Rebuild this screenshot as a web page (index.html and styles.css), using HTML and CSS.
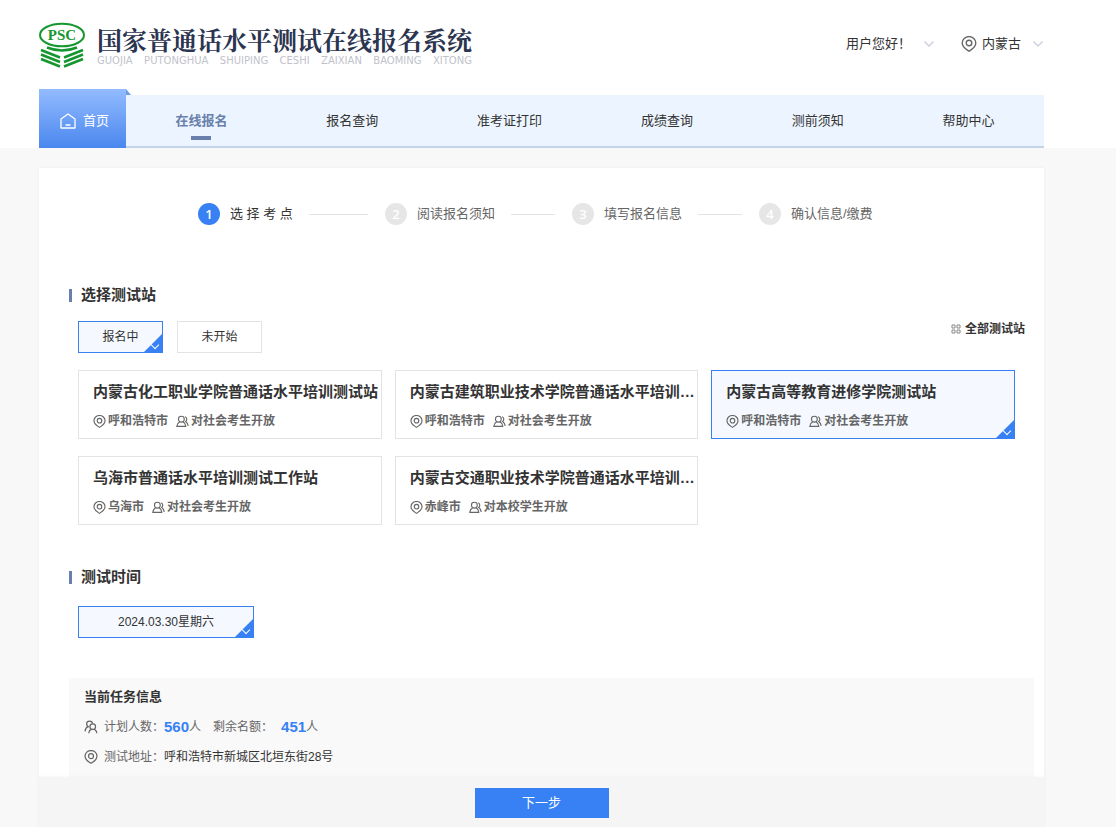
FILE: index.html
```html
<!DOCTYPE html>
<html lang="zh-CN">
<head>
<meta charset="utf-8">
<meta name="viewport" content="width=device-width, initial-scale=1">
<title>国家普通话水平测试在线报名系统</title>
<link rel="stylesheet" href="styles.css">
</head>
<body>
<svg class="sprite" aria-hidden="true">
  <symbol id="pin" viewBox="0 0 16 16">
    <path d="M8 15.2 C5.6 13.6 1.2 11.4 1.2 7 A6.8 6.4 0 0 1 14.8 7 C14.8 11.4 10.4 13.6 8 15.2Z"/>
    <circle cx="8" cy="7" r="2.8"/>
  </symbol>
  <symbol id="people" viewBox="0 0 16 16">
    <circle cx="6.6" cy="5.2" r="3.6"/>
    <path d="M4.6 8.4 C2.4 9.6 1.2 11.4 1 14 H12 C11.9 11.4 10.8 9.6 8.6 8.4"/>
    <path d="M11 2.2 C13.8 3 14 6.6 11.8 8 C13.8 9.2 14.8 11 15 13.6"/>
  </symbol>
  <symbol id="crowd" viewBox="0 0 16 16">
    <path d="M6 8 C2 7.200 2 1.400 6.400 1.400 C8.400 1.400 9.600 2.600 9.800 4"/>
    <path d="M4.600 7.600 C2.400 8.600 1.400 10.500 1.200 13"/>
    <circle cx="10" cy="7.600" r="3.200"/>
    <path d="M8.400 10.400 C6.400 11.400 5.600 13 5.400 15.200"/>
    <path d="M11.600 10.400 C13.600 11.400 14.600 13 14.800 15.200"/>
  </symbol>
  <symbol id="chevron" viewBox="0 0 12 8"><path d="M1.500 1.500 6 6 10.500 1.500"/></symbol>
</svg>

<header class="header">
  <div class="wrap">
    <div class="topbar">
      <a class="brand" href="#">
        <svg class="brand-mark" viewBox="0 0 46 46" role="img" aria-label="PSC">
          <ellipse cx="23" cy="13" rx="22" ry="11.300"/>
          <text x="23" y="18" text-anchor="middle">PSC</text>
          <path d="M2 28 L21 35.500 M2 32.500 L21 40 M2 37 L21 44.500 M44 28 L25 35.500 M44 32.500 L25 40 M44 37 L25 44.500"/>
          <path d="M8 25.500 Q23 31.500 38 25.500"/>
        </svg>
        <span class="brand-text">
          <span class="brand-name">国家普通话水平测试在线报名系统</span>
          <span class="brand-pinyin"><span>GUOJIA</span> <span>PUTONGHUA</span> <span>SHUIPING</span> <span>CESHI</span> <span>ZAIXIAN</span> <span>BAOMING</span> <span>XITONG</span></span>
        </span>
      </a>
      <div class="account">
        <button class="user" type="button">用户您好！<svg class="chevron"><use href="#chevron"/></svg></button>
        <label class="region">
          <svg class="icon icon-lg"><use href="#pin"/></svg>
          <select aria-label="地区"><option>内蒙古</option></select>
          <svg class="chevron"><use href="#chevron"/></svg>
        </label>
      </div>
    </div>
    <nav class="nav">
      <a class="home" href="#">
        <svg viewBox="0 0 16 16"><path d="M1 6 8 1 15 6 V15 H1Z M5.500 12 H10.500"/></svg>首页
      </a>
      <div class="links">
        <a class="current" href="#">在线报名</a>
        <a href="#">报名查询</a>
        <a href="#">准考证打印</a>
        <a href="#">成绩查询</a>
        <a href="#">测前须知</a>
        <a href="#">帮助中心</a>
      </div>
    </nav>
  </div>
</header>

<main class="wrap main">
  <div class="panel">
    <ol class="steps">
      <li class="active"><span class="num">1</span><span>选 择 考 点</span></li>
      <li><span class="num">2</span><span>阅读报名须知</span></li>
      <li><span class="num">3</span><span>填写报名信息</span></li>
      <li><span class="num">4</span><span>确认信息/缴费</span></li>
    </ol>

    <section class="stations">
      <h2>选择测试站</h2>
      <div class="filters">
        <button class="option selected" type="button" aria-pressed="true">报名中</button>
        <button class="option" type="button" aria-pressed="false">未开始</button>
        <a class="all" href="#">
          <svg viewBox="0 0 10 10"><path d="M1 1h3v3h-3z M6 1h3v3h-3z M1 6h3v3h-3z M6 6h3v3h-3z"/></svg>全部测试站
        </a>
      </div>
      <div class="cards">
        <button class="card" type="button">
          <span class="name">内蒙古化工职业学院普通话水平培训测试站</span>
          <span class="meta"><svg class="icon"><use href="#pin"/></svg><span>呼和浩特市</span><svg class="icon"><use href="#people"/></svg><span>对社会考生开放</span></span>
        </button>
        <button class="card" type="button">
          <span class="name">内蒙古建筑职业技术学院普通话水平培训测试站</span>
          <span class="meta"><svg class="icon"><use href="#pin"/></svg><span>呼和浩特市</span><svg class="icon"><use href="#people"/></svg><span>对社会考生开放</span></span>
        </button>
        <button class="card selected" type="button">
          <span class="name">内蒙古高等教育进修学院测试站</span>
          <span class="meta"><svg class="icon"><use href="#pin"/></svg><span>呼和浩特市</span><svg class="icon"><use href="#people"/></svg><span>对社会考生开放</span></span>
        </button>
        <button class="card" type="button">
          <span class="name">乌海市普通话水平培训测试工作站</span>
          <span class="meta"><svg class="icon"><use href="#pin"/></svg><span>乌海市</span><svg class="icon"><use href="#people"/></svg><span>对社会考生开放</span></span>
        </button>
        <button class="card" type="button">
          <span class="name">内蒙古交通职业技术学院普通话水平培训测试站</span>
          <span class="meta"><svg class="icon"><use href="#pin"/></svg><span>赤峰市</span><svg class="icon"><use href="#people"/></svg><span>对本校学生开放</span></span>
        </button>
      </div>
    </section>

    <section class="times">
      <h2>测试时间</h2>
      <div class="filters">
        <button class="option date selected" type="button" aria-pressed="true">2024.03.30星期六</button>
      </div>
    </section>

    <section class="info">
      <h3>当前任务信息</h3>
      <p><svg class="icon"><use href="#crowd"/></svg><span>计划人数：</span><strong>560</strong><span>人</span><span class="left">剩余名额：</span><strong>451</strong><span>人</span></p>
      <p><svg class="icon"><use href="#pin"/></svg><span>测试地址：</span><span class="address">呼和浩特市新城区北垣东街28号</span></p>
    </section>
  </div>
  <div class="actions"><button class="next" type="button">下一步</button></div>
</main>
</body>
</html>
```
FILE: styles.css
```css
* { box-sizing: border-box; }

body {
  margin: 0;
  min-height: 100vh;
  display: flex;
  flex-direction: column;
  background: #f8f8f8;
  color: #333;
  font: 13px/20px "Liberation Sans", "Noto Sans CJK SC", sans-serif;
}

a { color: inherit; text-decoration: none; }
button, select { font: inherit; color: inherit; cursor: pointer; }
h2, h3, p, ol { margin: 0; padding: 0; }

.sprite { position: absolute; width: 0; height: 0; }
.wrap { padding: 0 72px 0 39px; }

.icon {
  flex: none;
  width: 14px;
  height: 14px;
  fill: none;
  stroke: #666;
  stroke-width: 1.4;
}
.icon-lg { width: 16px; height: 16px; }
.chevron {
  flex: none;
  width: 12px;
  height: 8px;
  fill: none;
  stroke: #c9cfde;
  stroke-width: 1.4;
}

/* Header */
.header { background: #fff; }
.topbar {
  display: flex;
  justify-content: space-between;
  align-items: flex-start;
  height: 89px;
  padding-top: 22px;
}
.brand { display: flex; gap: 12px; }
.brand-mark { width: 46px; height: 46px; }
.brand-mark ellipse, .brand-mark path { fill: none; stroke: #15962f; stroke-width: 2; }
.brand-mark path { stroke-width: 2.6; }
.brand-mark text { font: bold 15px "Liberation Serif", serif; fill: #15962f; }
.brand-text { display: flex; flex-direction: column; white-space: nowrap; }
.brand-name {
  font-family: "Noto Serif CJK SC", "Noto Sans CJK SC", serif;
  font-size: 25px;
  font-weight: bold;
  line-height: 35px;
  color: #2c3550;
}
.brand-pinyin {
  display: flex;
  justify-content: space-between;
  font: 10px/8px "DejaVu Sans", sans-serif;
  color: #bfc2cb;
}

.account { display: flex; gap: 26px; padding-top: 12px; }
.user, .region { display: flex; align-items: center; }
.user { gap: 12px; padding: 0; border: 0; background: none; }
.region { gap: 5px; }
.region select {
  appearance: none;
  padding: 0;
  margin-right: 5px;
  border: 0;
  background: none;
}

.nav { display: flex; align-items: flex-end; }
.home {
  position: relative;
  display: flex;
  align-items: center;
  justify-content: center;
  gap: 7px;
  width: 87px;
  height: 59px;
  padding: 4px 0 0 4px;
  background: linear-gradient(#93bbff, #4a87ee);
  color: #fff;
}
.home::after {
  content: "";
  position: absolute;
  left: 100%;
  top: 0;
  width: 5px;
  height: 6px;
  background: #6b9ce6;
  clip-path: polygon(0 0, 100% 100%, 0 100%);
}
.home svg { width: 16px; height: 16px; fill: none; stroke: #fff; stroke-width: 1.3; stroke-linejoin: round; }
.links {
  flex: 1;
  display: flex;
  height: 53px;
  background: #ecf5ff;
  border-bottom: 2px solid #c3d4e8;
}
.links a {
  flex: 1 1 auto;
  display: flex;
  align-items: center;
  justify-content: center;
}
.links .current { position: relative; color: #6880ab; font-weight: bold; }
.links .current::after {
  content: "";
  position: absolute;
  bottom: 6px;
  width: 20px;
  height: 4px;
  background: #6880ab;
}

/* Main panel */
.main { flex: 1; display: flex; flex-direction: column; padding-top: 20px; }
.panel {
  padding: 35px 10px 0 30px;
  background: #fff;
  box-shadow: 0 0 3px rgba(0, 0, 0, .06);
}

.steps {
  display: grid;
  grid-template-columns: repeat(4, 1fr);
  padding: 0 88px 0 129px;
  list-style: none;
  color: #666;
}
.steps li { display: flex; align-items: center; gap: 10px; white-space: nowrap; }
.steps li:not(:last-child)::after {
  content: "";
  flex: 1;
  height: 1px;
  margin: 0 17px 0 6px;
  background: #e3e3e3;
}
.num {
  width: 22px;
  height: 22px;
  border-radius: 50%;
  background: #e6e6e6;
  color: #fff;
  font: 600 13px/22px "Open Sans", sans-serif;
  text-align: center;
}
.steps .active { color: #333; }
.active .num { background: #3881f4; }

h2 {
  display: flex;
  align-items: center;
  gap: 9px;
  font-size: 15px;
  line-height: 20px;
}
h2::before { content: ""; width: 3px; height: 13px; background: #6880ab; }

.stations { padding-top: 60px; }
.filters { display: flex; align-items: flex-start; gap: 14px; padding: 16px 9px 17px; }
.option {
  width: 85px;
  height: 32px;
  padding: 0;
  border: 1px solid #e3e3e3;
  background: #fff;
  font-size: 12px;
}
.date { width: 176px; }
.all {
  display: flex;
  align-items: center;
  gap: 4px;
  margin-left: auto;
  font-size: 12px;
  line-height: 16px;
  font-weight: bold;
}
.all svg { width: 10px; height: 10px; fill: none; stroke: #888; }

.cards {
  display: grid;
  grid-template-columns: repeat(3, minmax(0, 1fr));
  gap: 17px 13px;
  padding: 0 19px 0 9px;
}
.card {
  display: flex;
  flex-direction: column;
  gap: 11px;
  padding: 11px 0 9px 14px;
  border: 1px solid #e3e3e3;
  background: #fff;
  text-align: left;
}
.name {
  width: 100%;
  overflow: hidden;
  white-space: nowrap;
  text-overflow: ellipsis;
  font-size: 15px;
  line-height: 20px;
  font-weight: bold;
}
.meta {
  display: flex;
  align-items: center;
  gap: 2px;
  font-size: 12px;
  line-height: 16px;
  font-weight: bold;
  color: #666;
}
.meta .icon { width: 13px; height: 13px; }
.meta span + .icon { margin-left: 6px; }

.selected {
  position: relative;
  border-color: #3881f4;
  background: #f5f9ff;
}
.selected::before {
  content: "";
  position: absolute;
  right: 0;
  bottom: 0;
  width: 18px;
  height: 18px;
  background: #3881f4;
  clip-path: polygon(100% 0, 100% 100%, 0 100%);
}
.selected::after {
  content: "";
  position: absolute;
  right: 4px;
  bottom: 4px;
  width: 5px;
  height: 5px;
  border: solid #fff;
  border-width: 0 1px 1px 0;
  transform: rotate(45deg);
}

.times { padding-top: 42px; }
.times .filters { padding: 19px 9px 40px; }

.info { padding: 4px 15px 5px; background: #f9f9f9; }
.info h3 { font-size: 13px; line-height: 30px; }
.info p { display: flex; align-items: center; font-size: 12px; line-height: 30px; color: #666; }
.info .icon { margin-right: 6px; }
.info strong { font-size: 15px; color: #3881f4; }
.info .left { margin: 0 8px 0 12px; }
.info .address { color: #333; }

.actions {
  flex: 1;
  display: flex;
  justify-content: center;
  align-items: flex-start;
  padding: 11px 0 9px;
  background: #f5f5f5;
  box-shadow: 0 0 3px rgba(0, 0, 0, .06);
}
.next {
  width: 134px;
  height: 30px;
  padding: 0;
  border: 0;
  background: #3881f4;
  color: #fff;
}
```
